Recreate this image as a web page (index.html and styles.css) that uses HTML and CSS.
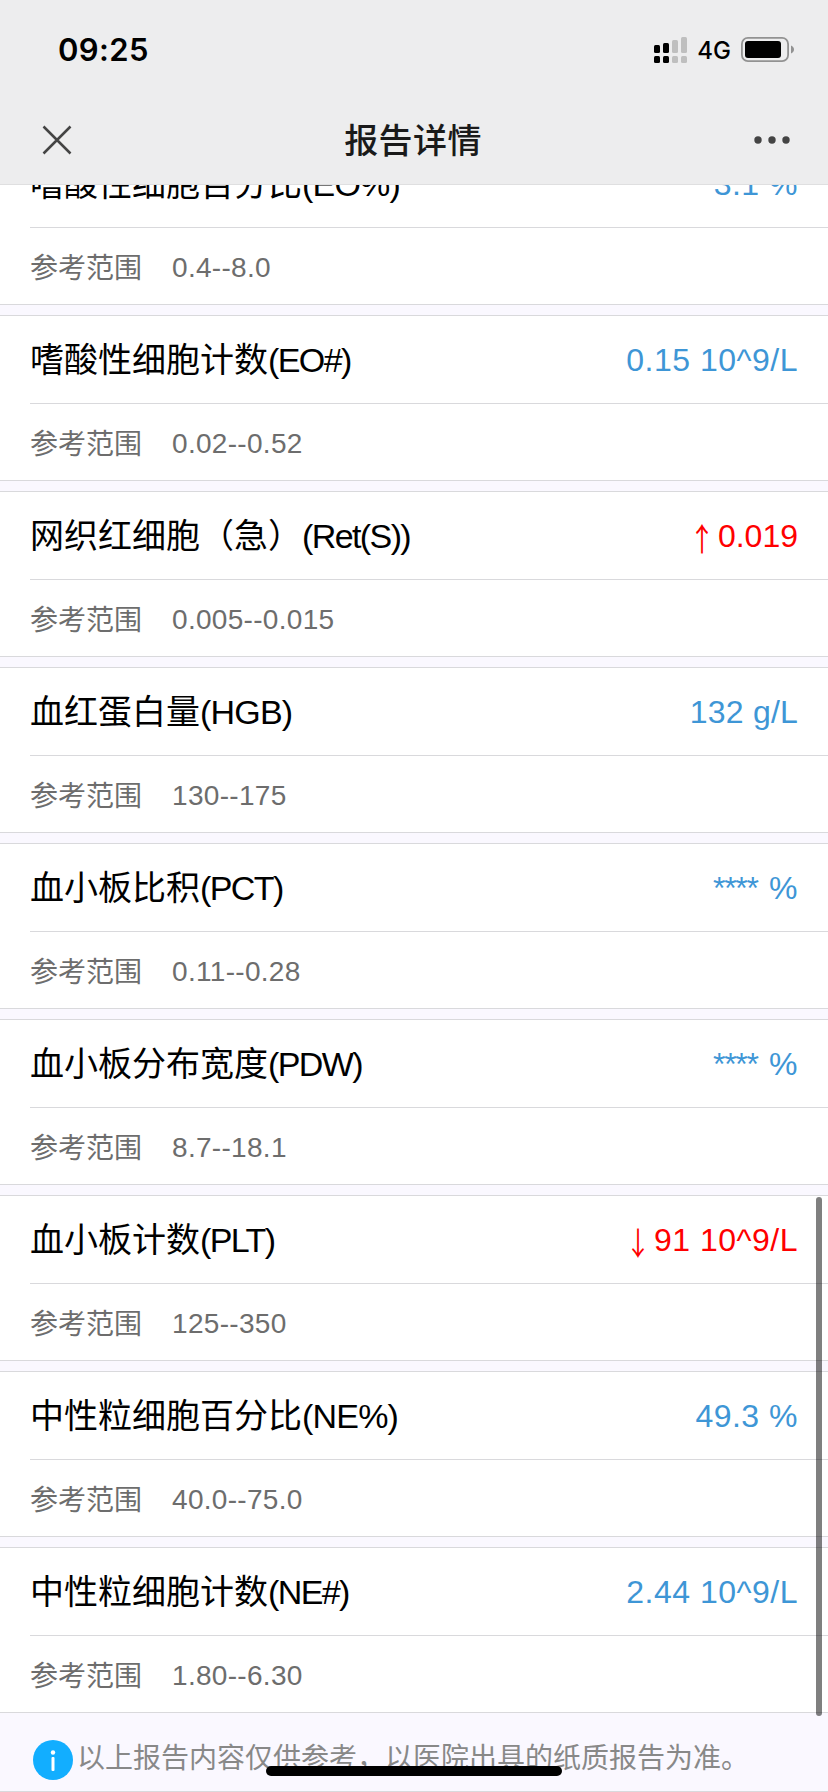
FILE: index.html
```html
<!DOCTYPE html>
<html lang="zh-CN">
<head>
<meta charset="utf-8">
<title>报告详情</title>
<link rel="stylesheet" href="styles.css">
</head>
<body>
<div class="screen">
  <header class="header">
    <div class="status">
      <span class="time">09:25</span>
      <div class="status-right">
        <svg class="signal" width="33" height="26" viewBox="0 0 33 26">
          <g fill="#000"><rect x="0" y="8" width="6" height="8" rx="1.5"/><rect x="9" y="6" width="6" height="10" rx="1.5"/><rect x="0" y="19" width="6" height="7" rx="1.5"/><rect x="9" y="19" width="6" height="7" rx="1.5"/></g>
          <g fill="#bfbfbf"><rect x="18" y="3" width="6" height="13" rx="1.5"/><rect x="27" y="0" width="6" height="16" rx="1.5"/><rect x="18" y="19" width="6" height="7" rx="1.5"/><rect x="27" y="19" width="6" height="7" rx="1.5"/></g>
        </svg>
        <span class="net">4G</span>
        <svg class="battery" width="53" height="25" viewBox="0 0 53 25">
          <rect x=".9" y=".9" width="46.2" height="23.2" rx="6" fill="none" stroke="#929292" stroke-width="1.8"/>
          <rect x="4" y="4" width="36" height="17" rx="3" fill="#000"/>
          <path d="M50 8.500c4 1.600 4 6.400 0 8z" fill="#929292"/>
        </svg>
      </div>
    </div>
    <nav class="nav">
      <svg class="close" width="30" height="30" viewBox="0 0 30 30"><path d="M1.500 1.500l27 27M28.500 1.500l-27 27" stroke="#444" stroke-width="2.500" fill="none"/></svg>
      <h1 class="nav-title">报告详情</h1>
      <svg class="more" width="36" height="8" viewBox="0 0 36 8" fill="#444"><circle cx="4" cy="4" r="3.700"/><circle cx="18" cy="4" r="3.700"/><circle cx="32" cy="4" r="3.700"/></svg>
    </nav>
  </header>

  <main class="list">
    <section class="card">
      <div class="head"><span class="name">嗜酸性细胞百分比<span class="code loose">(EO%)</span></span><span class="value pct">3.1 %</span></div>
      <div class="range"><span class="label">参考范围</span><span class="limits">0.4--8.0</span></div>
    </section>
    <section class="card">
      <div class="head"><span class="name">嗜酸性细胞计数<span class="code">(EO#)</span></span><span class="value power">0.15 10^9/L</span></div>
      <div class="range"><span class="label">参考范围</span><span class="limits">0.02--0.52</span></div>
    </section>
    <section class="card">
      <div class="head"><span class="name">网织红细胞（急）<span class="code">(Ret(S))</span></span><span class="value alert"><span class="arrow">↑</span>0.019</span></div>
      <div class="range"><span class="label">参考范围</span><span class="limits">0.005--0.015</span></div>
    </section>
    <section class="card">
      <div class="head"><span class="name">血红蛋白量<span class="code loose">(HGB)</span></span><span class="value unit">132 g/L</span></div>
      <div class="range"><span class="label">参考范围</span><span class="limits">130--175</span></div>
    </section>
    <section class="card">
      <div class="head"><span class="name">血小板比积<span class="code">(PCT)</span></span><span class="value pct"><span class="stars">****</span> %</span></div>
      <div class="range"><span class="label">参考范围</span><span class="limits">0.11--0.28</span></div>
    </section>
    <section class="card">
      <div class="head"><span class="name">血小板分布宽度<span class="code">(PDW)</span></span><span class="value pct"><span class="stars">****</span> %</span></div>
      <div class="range"><span class="label">参考范围</span><span class="limits">8.7--18.1</span></div>
    </section>
    <section class="card">
      <div class="head"><span class="name">血小板计数<span class="code">(PLT)</span></span><span class="value power alert"><span class="arrow">↓</span>91 10^9/L</span></div>
      <div class="range"><span class="label">参考范围</span><span class="limits">125--350</span></div>
    </section>
    <section class="card">
      <div class="head"><span class="name">中性粒细胞百分比<span class="code loose">(NE%)</span></span><span class="value pct">49.3 %</span></div>
      <div class="range"><span class="label">参考范围</span><span class="limits">40.0--75.0</span></div>
    </section>
    <section class="card">
      <div class="head"><span class="name">中性粒细胞计数<span class="code">(NE#)</span></span><span class="value power">2.44 10^9/L</span></div>
      <div class="range"><span class="label">参考范围</span><span class="limits">1.80--6.30</span></div>
    </section>
  </main>

  <footer class="note">
    <svg class="info" width="40" height="40" viewBox="0 0 40 40"><circle cx="20" cy="20" r="20" fill="#12aeff"/><circle cx="20" cy="12.500" r="2.200" fill="#fff"/><rect x="18.500" y="17" width="3" height="14" rx="1" fill="#fff"/></svg>
    <span class="note-text">以上报告内容仅供参考，以医院出具的纸质报告为准。</span>
  </footer>
  <div class="scrollbar"></div>
  <div class="home-bar"></div>
</div>
</body>
</html>
```
FILE: styles.css
```css
* { box-sizing: border-box; }
body { margin: 0; background: #faf8ff; font-family: "Liberation Sans", "Noto Sans CJK SC", sans-serif; }
svg { display: block; flex: none; }
.screen { position: relative; width: 828px; height: 1792px; overflow: hidden; display: flex; flex-direction: column; }

.header { flex: none; height: 185px; background: #ededee; border-bottom: 1px solid #dfdfe0; }
.status { height: 96px; padding: 3px 34px 0 58px; display: flex; align-items: center; justify-content: space-between; }
.time { font: 600 31px/40px Inter, sans-serif; letter-spacing: .4px; }
.status-right { display: flex; align-items: center; }
.net { font: 500 24px/30px Inter, sans-serif; margin: 2px 10px 0 10px; }
.nav { height: 88px; padding: 0 38px 0 42px; display: grid; grid-template-columns: 30px 1fr 36px; align-items: center; }
.nav-title { margin: -2px 0 0; text-align: center; font: 500 34px/48px "Noto Sans CJK SC", sans-serif; letter-spacing: .4px; color: #1a1a1a; }

.list { flex: none; height: 1528px; overflow: hidden; display: flex; flex-direction: column; gap: 10px; }
.card { flex: none; height: 166px; background: #fff; border: solid #d9d9dc; border-width: 1px 0; }
.card:first-child { margin-top: -46px; }
.head { height: 88px; margin-left: 30px; padding-right: 30px; border-bottom: 1px solid #d9d9dc; display: flex; align-items: center; justify-content: space-between; white-space: nowrap; }
.name { font-size: 34px; line-height: 48px; color: #000; }
.code { letter-spacing: -1.6px; }
.code.loose { letter-spacing: -.8px; }
.value { font-size: 32px; line-height: 48px; color: #3e96d6; }
.value.pct { letter-spacing: .5px; }
.value.power { letter-spacing: .5px; }
.value.unit { letter-spacing: .2px; }
.value.alert { color: #f00; }
.stars { letter-spacing: -1.3px; margin-right: 2px; }
.arrow { display: inline-block; transform: translateY(4px) scaleX(.8); font-family: "Noto Sans CJK SC", sans-serif; line-height: 1; letter-spacing: 0; }
.range { height: 76px; padding: 4px 0 0 30px; display: flex; align-items: center; gap: 30px; font-size: 28px; line-height: 40px; color: #6d6d6d; }
.label { padding-top: 1px; }
.limits { letter-spacing: .3px; }

.note { flex: none; height: 79px; padding: 15px 0 0 33px; border-bottom: 1px solid #d9d9dc; display: flex; align-items: center; gap: 4px; }
.note-text { font-size: 28px; line-height: 40px; color: #888; margin-top: -2px; white-space: nowrap; }

.scrollbar { position: absolute; left: 816px; top: 1197px; width: 6px; height: 519px; border-radius: 3px; background: rgba(0,0,0,.5); }
.home-bar { position: absolute; left: 266px; top: 1766px; width: 296px; height: 10px; border-radius: 5px; background: #000; }
```
